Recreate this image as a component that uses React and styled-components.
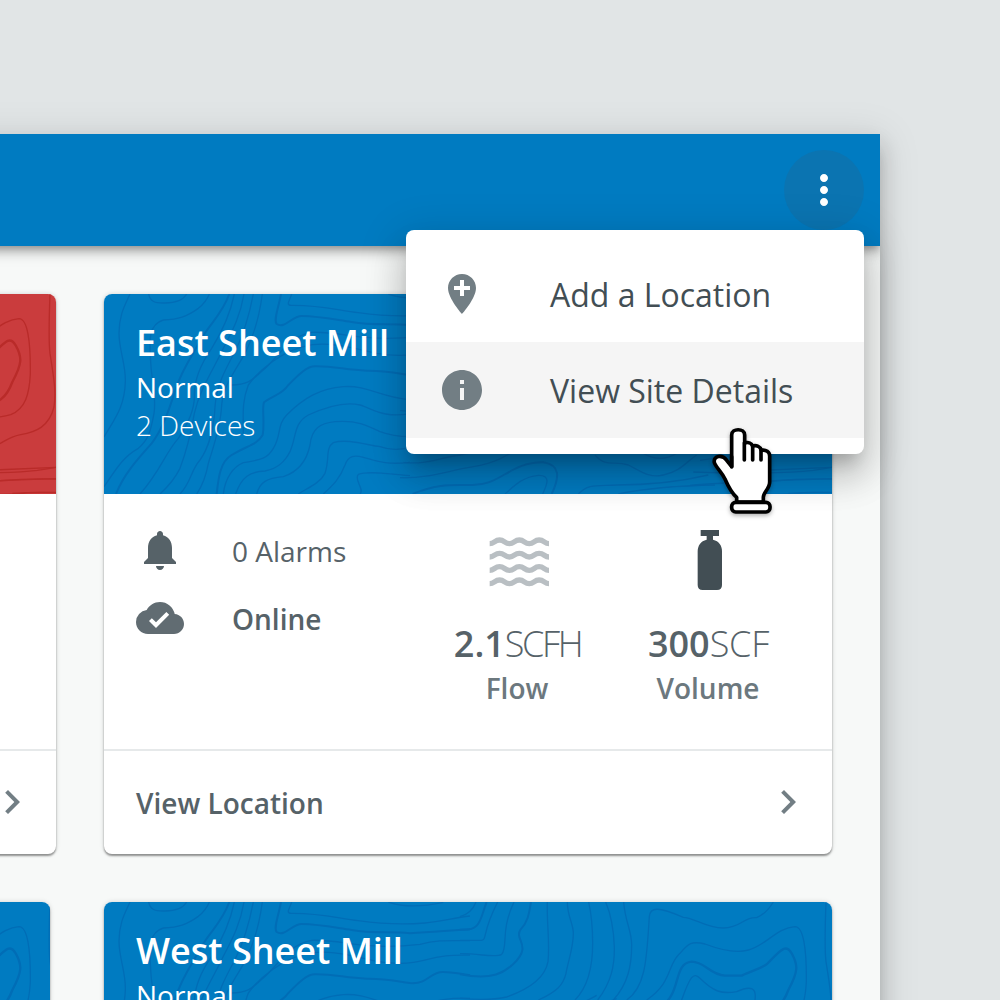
import React from "react";
import styled, { createGlobalStyle } from "styled-components";

const GlobalStyle = createGlobalStyle`
  * { box-sizing: border-box; }
  body { margin: 0; background: #e1e5e6; font-family: "Open Sans", "Noto Sans", sans-serif; }
`;

const Canvas = styled.div`
  width: 1000px;
  height: 1000px;
  overflow: hidden;
  background: #e1e5e6;
  padding: 134px 120px 0 0;
  display: flex;
  justify-content: flex-end;
`;

const Panel = styled.main`
  position: relative;
  flex: none;
  width: 1600px;
  height: 1000px;
  background: #f7f9f8;
  box-shadow: 0 12px 14px -8px rgba(0, 0, 0, 0.2), 0 12px 20px 1px rgba(0, 0, 0, 0.16), 0 6px 36px 5px rgba(0, 0, 0, 0.1);
`;

const AppBar = styled.header`
  position: relative;
  display: flex;
  justify-content: flex-end;
  align-items: center;
  height: 112px;
  padding-right: 16px;
  background: #007bc1;
  clip-path: inset(0 0 -40px 0);
  box-shadow: 0 4px 8px -2px rgba(0, 0, 0, 0.3), 0 8px 10px 0 rgba(0, 0, 0, 0.14), 0 2px 20px 0 rgba(0, 0, 0, 0.1);
`;

const MoreButton = styled.button`
  display: grid;
  place-items: center;
  width: 80px;
  height: 80px;
  padding: 0;
  border: 0;
  border-radius: 50%;
  background: #0b74b1;
  color: #fff;
`;

const Icon = styled.svg`
  display: block;
  flex: none;
  width: 48px;
  height: 48px;
  fill: currentColor;
`;

const Cards = styled.section`
  display: flex;
  flex-direction: column;
  gap: 48px;
  padding: 48px 48px 0;
`;

const CardRow = styled.div`
  display: flex;
  justify-content: space-between;
  width: 1504px;
`;

const Card = styled.article`
  flex: none;
  width: ${(p) => p.$width || 728}px;
  height: 560px;
  border-radius: 8px;
  overflow: hidden;
  background: #fff;
  box-shadow: 0 2px 2px 0 rgba(0, 0, 0, 0.38), 0 0 5px 0 rgba(0, 0, 0, 0.15);
`;

const CardHeader = styled.div`
  display: grid;
  height: 200px;
  overflow: hidden;
  color: #fff;
  background: ${(p) => (p.$alarm ? "#ca3c3d" : "#007bc1")};
  --contour: ${(p) => (p.$alarm ? "#b92b29" : "#006db6")};
  > * { grid-area: 1 / 1; }
`;

const ContourSvg = styled.svg`
  display: block;
  width: 728px;
  height: 200px;
  fill: none;
  stroke: var(--contour);
  stroke-width: 4;
`;

const HeaderText = styled.div`
  z-index: 1;
  padding: 24px 32px 0;
`;

const Title = styled.h2`
  margin: 0;
  font-size: 36px;
  line-height: 50px;
  font-weight: 600;
`;

const Subtitle = styled.div`
  font-size: 28px;
  line-height: 38px;
  font-weight: ${(p) => (p.$light ? 300 : 400)};
`;

const CardBody = styled.div`
  display: flex;
  height: 255px;
  padding: 32px 27px 0 32px;
  color: #566268;
`;

const StatusList = styled.div`
  display: flex;
  flex-direction: column;
  gap: 20px;
  flex: 1;
`;

const StatusRow = styled.div`
  display: flex;
  align-items: center;
  gap: 48px;
  height: 48px;
  font-size: 28px;
  font-weight: ${(p) => (p.$strong ? 600 : 400)};
  line-height: 50px;
  svg { color: ${(p) => (p.$strong ? "#616c72" : "#566268")}; }
  > span { padding-top: 2px; }
`;

const Stat = styled.div`
  display: flex;
  flex-direction: column;
  align-items: center;
  width: 191px;
  padding-top: 4px;
`;

const StatIcon = styled.svg`
  display: block;
  width: 60px;
  height: 60px;
  margin-bottom: 30px;
  fill: ${(p) => p.$fill || "none"};
  overflow: visible;
`;

const Value = styled.div`
  height: 48px;
  padding-right: 2px;
  font-size: 36px;
  font-weight: 600;
  line-height: 48px;
  white-space: nowrap;
`;

const Unit = styled.span`
  font-weight: 300;
  letter-spacing: ${(p) => p.$spacing}px;
`;

const Label = styled.div`
  padding-right: 3px;
  font-size: 28px;
  line-height: 40px;
  font-weight: 600;
  color: #6c787e;
`;

const CardFooter = styled.div`
  display: flex;
  justify-content: space-between;
  align-items: center;
  height: 105px;
  border-top: 2px solid #e6e9ea;
  padding: 0 20px 2px 32px;
  font-size: 28px;
  font-weight: 600;
  color: #566268;
  span { padding-top: 2px; }
  svg { color: #727e84; }
`;

const Menu = styled.nav`
  position: absolute;
  top: 96px;
  right: 16px;
  width: 458px;
  padding: 16px 0;
  border-radius: 8px;
  background: #fff;
  box-shadow: 0 14px 16px -8px rgba(0, 0, 0, 0.2), 0 24px 34px 2px rgba(0, 0, 0, 0.14), 0 10px 44px 8px rgba(0, 0, 0, 0.12);
`;

const MenuItem = styled.div`
  display: flex;
  align-items: center;
  gap: 64px;
  height: 96px;
  padding-left: 32px;
  font-size: 32px;
  line-height: 48px;
  color: #424e54;
  background: ${(p) => (p.$hover ? "#f5f5f5" : "#fff")};
  span { padding-top: 2px; }
  svg { color: #727e84; }
`;

const Cursor = styled.svg`
  position: absolute;
  top: 286px;
  right: 90px;
  width: 90px;
  height: 100px;
  filter: drop-shadow(0 2px 2px rgba(0, 0, 0, 0.3));
`;

const paths = {
  more: "M12 8c1.1 0 2-.9 2-2s-.9-2-2-2-2 .9-2 2 .9 2 2 2zm0 2c-1.1 0-2 .9-2 2s.9 2 2 2 2-.9 2-2-.9-2-2-2zm0 6c-1.1 0-2 .9-2 2s.9 2 2 2 2-.9 2-2-.9-2-2-2z",
  addLocation: "M12 2C8.14 2 5 5.14 5 9c0 5.25 7 13 7 13s7-7.75 7-13c0-3.86-3.14-7-7-7zm4 8h-3v3h-2v-3H8V8h3V5h2v3h3v2z",
  info: "M12 2C6.48 2 2 6.48 2 12s4.48 10 10 10 10-4.48 10-10S17.52 2 12 2zm1 15h-2v-6h2v6zm0-8h-2V7h2v2z",
  bell: "M12 22c1.1 0 2-.9 2-2h-4c0 1.1.89 2 2 2zm6-6v-5c0-3.07-1.64-5.64-4.5-6.32V4c0-.83-.67-1.5-1.5-1.5s-1.5.67-1.5 1.5v.68C7.63 5.36 6 7.92 6 11v5l-2 2v1h16v-1l-2-2z",
  cloud: "M19.35 10.04A7.49 7.49 0 0 0 12 4C9.11 4 6.6 5.64 5.35 8.04A5.994 5.994 0 0 0 0 14c0 3.31 2.69 6 6 6h13c2.76 0 5-2.24 5-5 0-2.64-2.05-4.78-4.65-4.96zM10 17l-3.5-3.5 1.41-1.41L10 14.17 15.18 9l1.41 1.41L10 17z",
  chevron: "M10 6L8.59 7.41 13.17 12l-4.58 4.59L10 18l6-6z",
};

const Glyph = ({ name }) => (
  <Icon viewBox="0 0 24 24" aria-hidden="true">
    <path d={paths[name]} />
  </Icon>
);

const Contours = () => (
  <ContourSvg viewBox="0 0 2184 600" aria-hidden="true">
    {/* left half */}
    <g transform="translate(-12 -27)">
      <path d="M90 27C75 60 57 90 57 145C57 195 78 240 76 290C74 365 45 400 12 456" />
      <path d="M146 27C150 50 165 55 195 54C225 54 250 45 260 27" />
      <path d="M12 605C50 550 70 515 115 490C145 465 152 440 162 385C170 335 155 290 152 230C148 165 145 118 190 105C235 103 260 95 295 70Q318 52 328 27" />
      <path strokeWidth="6" d="M388 27C365 90 330 115 305 160C275 215 245 255 228 310C210 365 190 430 155 475C110 525 70 570 48 627" />
      <path d="M403 27C390 90 360 150 335 190C300 240 283 285 283 330C285 375 255 430 235 460C195 505 180 560 120 627" />
      <path d="M432 27C420 100 390 150 370 190C340 255 300 310 283 385C270 460 255 510 240 550Q220 590 180 627" />
      <path d="M460 27C448 90 430 150 405 200C375 255 350 300 345 365C342 430 325 490 300 525C270 560 275 590 240 627" />
      <path d="M487 27C480 80 468 140 435 205C405 260 370 300 365 360C362 430 335 500 325 535Q315 590 290 627" />
      <path strokeWidth="6" d="M543 27C535 70 520 107 530 117C555 133 575 93 605 93C660 94 700 103 755 111C820 122 870 115 930 121C1000 117 1045 113 1110 109" />
      <path d="M575 27C570 45 555 62 575 61C660 60 710 75 775 83C860 95 915 95 975 90C1025 85 1060 75 1110 69" />
      <path d="M865 27Q930 50 1030 28" />
      <path d="M395 300C450 300 460 280 490 255C540 210 565 155 635 142C700 140 750 155 810 158C870 163 925 158 960 154C1010 140 1050 143 1110 143" />
      <path d="M430 450C430 390 425 350 445 300C480 250 550 200 610 185C680 165 760 190 830 205C890 215 945 210 980 200C1030 185 1065 187 1110 186" />
      <path strokeWidth="6" d="M350 627C355 580 360 530 395 510C445 480 470 480 488 450C495 410 485 370 492 352C520 330 545 330 565 300C595 270 620 244 645 244C705 243 735 255 800 257C860 256 890 265 930 270C985 275 990 235 1030 237Q1075 239 1110 247" />
      <path d="M370 627C375 580 400 545 430 533C475 525 500 525 520 490C545 450 530 420 560 390C610 340 660 310 730 305C800 300 840 335 920 343C990 335 1010 312 1110 316" />
      <path d="M407 627C425 575 450 560 495 558C535 550 555 530 570 500C590 455 580 415 625 390C690 360 740 350 780 360C820 372 850 400 930 386" />
      <path d="M470 627C480 590 500 580 550 575C595 560 620 530 630 480C635 430 660 415 705 410C770 405 800 420 840 440Q880 455 930 455" />
      <path d="M595 627C620 610 660 595 675 565C690 520 675 490 700 473C740 460 800 480 840 485Q880 500 930 487" />
      <path d="M670 627C700 600 720 580 735 540C745 510 765 510 790 517C840 530 860 540 930 532" />
      <path d="M780 627C795 612 760 585 775 568C810 555 880 570 930 572" />
    </g>
    {/* centre, below the ridge line */}
    <g transform="translate(888 408)">
      <path d="M10 97C80 105 110 85 180 75Q240 66 290 30M0 143C90 145 130 125 220 110C310 95 340 60 420 20" />
      <path strokeWidth="6" d="M38 192C110 160 160 165 210 165C300 170 330 95 430 97C480 105 480 140 455 192" />
      <path d="M315 192C345 165 370 140 415 136C455 135 440 165 428 192M535 192C565 160 590 168 650 165C760 165 840 155 925 135M655 192Q770 168 945 165M585 75C620 115 640 90 685 105C730 128 750 145 790 135C840 125 860 95 890 75M730 70Q780 100 830 70M1110 120L1296 112M1115 153Q1200 145 1296 147M1165 190Q1240 185 1296 188" />
    </g>
    {/* right half */}
    <g transform="translate(1068 -21)">
      <path d="M0 65Q35 55 48 21M0 136L65 136C82 133 65 115 113 21M0 176C60 175 105 190 125 178C145 155 120 110 162 21M0 310C60 315 100 315 140 306C200 285 255 250 264 200C270 140 260 90 262 21M235 315C290 290 310 270 318 235C325 195 340 160 340 115C340 85 322 65 322 21M345 315C390 270 398 200 398 145Q398 75 386 21M413 315C455 260 464 210 463 155Q460 75 437 21M460 315C505 265 515 210 515 150C515 105 495 80 491 21M500 315C560 275 560 180 568 65C570 35 595 35 670 67C700 67 740 100 790 99C845 98 850 65 890 68Q920 55 940 21" />
      <path strokeWidth="6" d="M0 104C65 110 60 70 80 21M0 238C100 258 135 230 160 207C220 150 160 135 182 103C205 80 208 50 213 21" />
      <path d="M560 315C640 260 620 210 660 175C685 145 695 137 735 147C785 166 830 175 865 165C920 150 950 98 1005 95C1030 95 1040 160 1039 260C1036 320 1025 365 980 383C920 400 885 385 850 410C780 450 730 455 660 475" />
      <path strokeWidth="7" d="M610 330C665 285 640 205 695 200C735 200 750 240 795 242H845C880 225 910 220 925 203C970 155 980 150 995 175C1015 210 1015 230 985 285C965 340 940 345 895 360C850 365 820 400 760 410C690 410 590 420 560 370C560 350 580 350 610 330Z" />
      <path d="M665 315C690 245 700 230 720 250C760 290 785 298 830 290C875 270 890 280 885 315C870 355 820 340 780 360C720 385 650 380 665 315Z" />
      <path d="M1098 21C1095 100 1093 160 1098 200C1110 275 1117 315 1110 360C1095 420 1055 435 1010 443C970 450 955 472 910 485C850 500 800 510 720 520M700 555C810 560 970 560 1060 550Q1090 545 1116 541M690 595Q820 585 1116 575M900 621Q1000 624 1030 617L1116 616" />
    </g>
    {/* middle ridges */}
    <g transform="translate(888 0)">
      <path d="M0 350C110 360 170 330 330 330C450 340 520 320 590 280M20 410C140 420 190 375 330 385C470 390 540 330 650 290M130 465C220 440 290 445 370 425C470 395 540 400 610 450M580 350C650 410 700 440 760 450" />
    </g>
  </ContourSvg>
);

const wave = "M0 0C14 0 15 -11 29.7 -11S45 0 59.3 0S74 -11 89 -11S104 0 118.7 0S133 -11 148.3 -11S164 0 178 0";

const FlowIcon = () => (
  <StatIcon viewBox="0 0 180 180" aria-hidden="true">
    <g transform="translate(2 42)" stroke="#b9bfc3" strokeWidth="16">
      {[0, 40, 80, 120].map((y) => (
        <path key={y} d={wave} transform={`translate(0 ${y - 1})`} />
      ))}
    </g>
  </StatIcon>
);

const TankIcon = () => (
  <StatIcon $fill="#424e54" viewBox="0 0 180 180" aria-hidden="true">
    <path d="M62 0H117V18H99V29C117 33 126 47 126 64V165Q126 180 111 180H68Q53 180 53 165V64C53 47 62 33 80 29V18H62Z" />
  </StatIcon>
);

function LocationCard({ title, devices, alarm, width }) {
  return (
    <Card $width={width}>
      <CardHeader $alarm={alarm}>
        <Contours />
        {title && (
          <HeaderText>
            <Title>{title}</Title>
            <Subtitle>Normal</Subtitle>
            {devices && <Subtitle $light>{devices}</Subtitle>}
          </HeaderText>
        )}
      </CardHeader>
      <CardBody>
        {devices && (
          <>
            <StatusList>
              <StatusRow><Glyph name="bell" /><span>0 Alarms</span></StatusRow>
              <StatusRow $strong><Glyph name="cloud" /><span>Online</span></StatusRow>
            </StatusList>
            <Stat>
              <FlowIcon />
              <Value>2.1<Unit $spacing={-2.4}>SCFH</Unit></Value>
              <Label>Flow</Label>
            </Stat>
            <Stat>
              <TankIcon />
              <Value>300<Unit $spacing={-0.2}>SCF</Unit></Value>
              <Label>Volume</Label>
            </Stat>
          </>
        )}
      </CardBody>
      <CardFooter>
        <span>{devices ? "View Location" : ""}</span>
        <Glyph name="chevron" />
      </CardFooter>
    </Card>
  );
}

const HandCursor = () => (
  <Cursor viewBox="0 0 270 300" aria-hidden="true">
    <path
      d="M95 140V45C95 24 134 24 134 45V69C146 65 155 71 158 78C170 75 181 80 184 91C198 88 209 96 209 108V186C209 207 190 216 190 232V246H110V232C92 217 84 198 75 177C66 158 50 145 43 128C39 106 68 103 80 121Z"
      fill="#fff" stroke="#000" strokeWidth="11" strokeLinejoin="round"
    />
    <path d="M133 69V120M158 78V120M183 90V120M95 110V140" fill="none" stroke="#000" strokeWidth="11" strokeLinecap="round" />
    <rect x="95" y="247" width="115" height="29" rx="12" fill="#fff" stroke="#000" strokeWidth="11" />
  </Cursor>
);

export default function App() {
  return (
    <Canvas>
      <GlobalStyle />
      <Panel>
        <AppBar>
          <MoreButton aria-label="More"><Glyph name="more" /></MoreButton>
        </AppBar>
        <Cards>
          <CardRow>
            <LocationCard alarm />
            <LocationCard title="East Sheet Mill" devices="2 Devices" />
          </CardRow>
          <CardRow>
            <LocationCard width={722} />
            <LocationCard title="West Sheet Mill" />
          </CardRow>
        </Cards>
        <Menu>
          <MenuItem><Glyph name="addLocation" /><span>Add a Location</span></MenuItem>
          <MenuItem $hover><Glyph name="info" /><span>View Site Details</span></MenuItem>
        </Menu>
        <HandCursor />
      </Panel>
    </Canvas>
  );
}
